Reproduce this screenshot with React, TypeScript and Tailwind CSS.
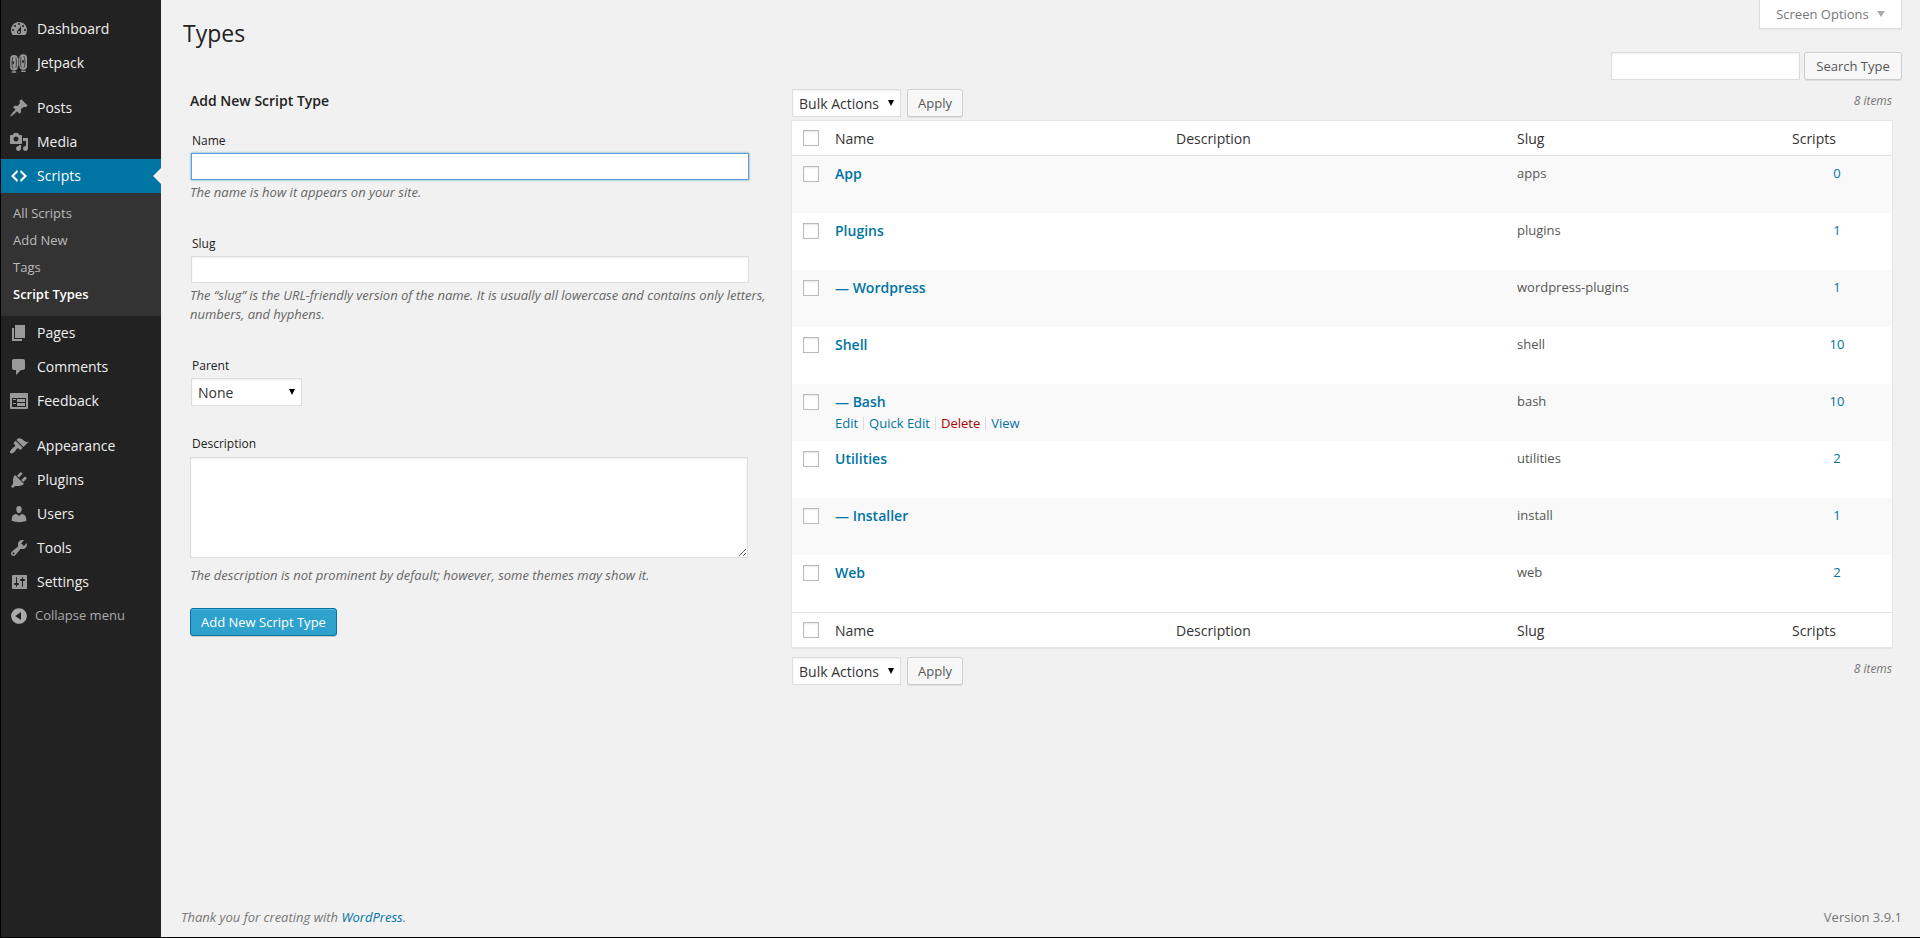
import React from "react";

const icons: Record<string, string> = {
  dashboard:
    "M3.76 16h12.48c1.1-1.37 1.76-3.11 1.76-5 0-4.42-3.58-8-8-8s-8 3.58-8 8c0 1.89.66 3.63 1.76 5zM10 4c.55 0 1 .45 1 1s-.45 1-1 1-1-.45-1-1 .45-1 1-1zM6 6c.55 0 1 .45 1 1s-.45 1-1 1-1-.45-1-1 .45-1 1-1zm8 0c.55 0 1 .45 1 1s-.45 1-1 1-1-.45-1-1 .45-1 1-1zm-5.37 5.55L12 7v6c0 1.1-.9 2-2 2s-2-.9-2-2c0-.57.24-1.08.63-1.45zM4 10c.55 0 1 .45 1 1s-.45 1-1 1-1-.45-1-1 .45-1 1-1zm12 0c.55 0 1 .45 1 1s-.45 1-1 1-1-.45-1-1 .45-1 1-1zm-5 3c0-.55-.45-1-1-1s-1 .45-1 1 .45 1 1 1 1-.45 1-1z",
  posts:
    "M10.44 3.02l1.82-1.82 6.36 6.35-1.83 1.82c-1.05-.68-2.48-.57-3.41.36l-.75.75c-.92.93-1.04 2.35-.35 3.41l-1.83 1.82-2.41-2.41-2.8 2.79c-.42.42-3.38 2.71-3.8 2.29s1.86-3.39 2.28-3.81l2.79-2.79L4.1 9.36l1.83-1.82c1.05.69 2.48.57 3.4-.36l.75-.75c.93-.92 1.05-2.35.36-3.41z",
  media:
    "M13 11V4c0-.55-.45-1-1-1h-1.67L9 1H5L3.67 3H2c-.55 0-1 .45-1 1v7c0 .55.45 1 1 1h10c.55 0 1-.45 1-1zM7 4.5c1.38 0 2.5 1.12 2.5 2.5S8.38 9.5 7 9.5 4.5 8.38 4.5 7 5.62 4.5 7 4.5zM14 6h5v10.5c0 1.38-1.12 2.5-2.5 2.5S14 17.88 14 16.5s1.12-2.5 2.5-2.5c.17 0 .34.02.5.05V9h-3V6zm-4 8.05V13h2v3.5c0 1.38-1.12 2.5-2.5 2.5S7 17.88 7 16.5 8.12 14 9.5 14c.17 0 .34.02.5.05z",
  code: "M9 6l-4 4 4 4-1 2-6-6 6-6zm2 8l4-4-4-4 1-2 6 6-6 6z",
  pages: "M6 15V2h10v13H6zm-1 1h8v2H3V5h2v11z",
  comments:
    "M5 2h9c1.1 0 2 .9 2 2v7c0 1.1-.9 2-2 2h-2l-5 5v-5H5c-1.1 0-2-.9-2-2V4c0-1.1.9-2 2-2z",
  feedback:
    "M2 2h16c.55 0 1 .45 1 1v14c0 .55-.45 1-1 1H2c-.55 0-1-.45-1-1V3c0-.55.45-1 1-1zm15 14V7H3v9h14zM4 8v1h3V8H4zm4 0v3h8V8H8zm-4 4v1h3v-1H4zm4 0v3h8v-3H8z",
  appearance:
    "M14.48 11.06L7.41 3.99l1.5-1.5c.5-.56 2.3-.47 3.51.32 1.21.8 1.43 1.28 2.91 2.1 1.18.64 2.45 1.26 4.45.85zm-.71.71L6.7 4.7 4.93 6.47c-.39.39-.39 1.02 0 1.41l1.06 1.06c.39.39.39 1.03 0 1.42-.6.6-1.43 1.11-2.21 1.69-.35.26-.7.53-1.01.84C1.43 14.23.4 16.08 1.4 17.07c.99 1 2.84-.03 4.18-1.36.31-.31.58-.66.85-1.02.57-.78 1.08-1.61 1.69-2.21.39-.39 1.02-.39 1.41 0l1.06 1.06c.39.39 1.02.39 1.41 0z",
  plugins:
    "M13.11 4.36L9.87 7.6 8 5.73l3.24-3.24c.35-.34 1.05-.2 1.56.32.52.51.66 1.21.31 1.55zm-8 1.77l.91-1.12 9.01 9.01-1.19.84c-.71.71-2.63 1.16-3.82 1.16H6.14L4.9 17.26c-.59.59-1.54.59-2.12 0-.59-.58-.59-1.53 0-2.12l1.24-1.24v-3.88c0-1.13.4-3.19 1.09-3.89zm7.26 3.97l3.24-3.24c.34-.35 1.04-.21 1.55.31.52.51.66 1.21.31 1.55l-3.24 3.25z",
  users:
    "M10 9.25c-2.27 0-2.73-3.44-2.73-3.44C7 4.02 7.82 2 9.97 2c2.16 0 2.98 2.02 2.71 3.81 0 0-.41 3.44-2.68 3.44zm0 2.57L12.72 10c2.39 0 4.52 2.33 4.52 4.53v2.49s-3.65 1.13-7.24 1.13c-3.65 0-7.24-1.13-7.24-1.13v-2.49c0-2.25 1.94-4.48 4.47-4.48z",
  tools:
    "M16.68 9.77c-1.34 1.34-3.3 1.67-4.95.99l-5.41 6.52c-.99.99-2.59.99-3.58 0s-.99-2.59 0-3.57l6.52-5.42c-.68-1.65-.35-3.61.99-4.95 1.28-1.28 3.12-1.62 4.72-1.06l-2.89 2.89 2.82 2.82 2.86-2.87c.53 1.58.18 3.39-1.08 4.65zM3.81 16.21c.4.39 1.04.39 1.43 0 .4-.4.4-1.04 0-1.43-.39-.4-1.03-.4-1.43 0-.39.39-.39 1.03 0 1.43z",
  settings:
    "M18 16V4c0-.55-.45-1-1-1H4c-.55 0-1 .45-1 1v12c0 .55.45 1 1 1h13c.55 0 1-.45 1-1zM8 11h1c.55 0 1 .45 1 1s-.45 1-1 1H8v1.5c0 .28-.22.5-.5.5s-.5-.22-.5-.5V13H6c-.55 0-1-.45-1-1s.45-1 1-1h1V5.500c0-.28.22-.5.5-.5s.5.22.5.5V11zm5-2h-1c-.55 0-1-.45-1-1s.45-1 1-1h1V5.500c0-.28.22-.5.5-.5s.5.22.5.5V7h1c.55 0 1 .45 1 1s-.45 1-1 1h-1v5.500c0 .28-.22.5-.5.5s-.5-.22-.5-.5V9z",
  collapse:
    "M10 2.16c4.33 0 7.84 3.51 7.84 7.84s-3.51 7.84-7.84 7.84S2.16 14.33 2.16 10 5.67 2.16 10 2.16zm2 11.72V6.12L6.18 9.97z",
};

function JetpackIcon() {
  return (
    <svg viewBox="0 0 20 20" className="size-5" fill="none" aria-hidden="true">
      <g fill="currentColor">
        <rect x="1.2" y="2" width="7.6" height="15.6" rx="3.8" />
        <rect x="10.400" y="1.200" width="7.600" height="15.600" rx="3.800" />
        <rect x="8" y="5" width="3" height="8" />
        <rect x="2.600" y="18.300" width="4.800" height="1.400" rx=".7" />
        <rect x="12" y="17.500" width="4.800" height="1.400" rx=".7" />
      </g>
      <g stroke="#222">
        <path d="M4.400 3.800C2.600 5.500 2.600 14 4.400 15.800M6.800 4.500c.8 2.500.8 8 0 10.500" strokeWidth=".8" />
        <path d="M12.200 3.800c-.8 2.500-.8 8 0 10.500M14.600 3c1.800 1.700 1.800 10.200 0 12" strokeWidth=".8" />
        <path d="M9.600 5v8" strokeWidth=".7" />
      </g>
      <g fill="#222">
        <path d="M4.200 7.800L5.400 9.700 4.200 11.600 3 9.700z" />
        <path d="M14 6.600l1.200 2-1.200 2-1.200-2z" />
      </g>
    </svg>
  );
}

function Icon({ name }: { name: string }) {
  if (name === "jetpack") return <JetpackIcon />;
  return (
    <svg viewBox="0 0 20 20" className="size-5" fill="currentColor" fillRule="evenodd" aria-hidden="true">
      <path d={icons[name]} />
    </svg>
  );
}

function MenuItem({ icon, label }: { icon: string; label: string }) {
  return (
    <li>
      <a href="#" className="flex h-[34px] items-center text-[14px] leading-[18px] text-[#eee]">
        <span className="flex w-9 justify-center text-[#999]">
          <Icon name={icon} />
        </span>
        {label}
      </a>
    </li>
  );
}

const submenu = ["All Scripts", "Add New", "Tags"];

function Sidebar() {
  return (
    <nav aria-label="Main menu" className="w-40 shrink-0 bg-[#222] pt-3">
      <ul>
        <MenuItem icon="dashboard" label="Dashboard" />
        <MenuItem icon="jetpack" label="Jetpack" />
      </ul>
      <ul className="mt-[11px]">
        <MenuItem icon="posts" label="Posts" />
        <MenuItem icon="media" label="Media" />
        <li>
          <a
            href="#"
            className="relative flex h-[34px] items-center bg-[#0074a2] text-[14px] leading-[18px] text-white"
          >
            <span className="flex w-9 justify-center">
              <Icon name="code" />
            </span>
            Scripts
            <span className="absolute top-1/2 right-0 -translate-y-1/2 border-8 border-transparent border-r-[#f1f1f1]" />
          </a>
          <ul className="bg-[#333] pt-[7px] pb-2 text-[13px] leading-[27px] text-[#bbb]">
            {submenu.map((item) => (
              <li key={item}>
                <a href="#" className="block px-3">
                  {item}
                </a>
              </li>
            ))}
            <li>
              <a href="#" className="block px-3 font-semibold text-white">
                Script Types
              </a>
            </li>
          </ul>
        </li>
        <MenuItem icon="pages" label="Pages" />
        <MenuItem icon="comments" label="Comments" />
        <MenuItem icon="feedback" label="Feedback" />
      </ul>
      <ul className="mt-[11px]">
        <MenuItem icon="appearance" label="Appearance" />
        <MenuItem icon="plugins" label="Plugins" />
        <MenuItem icon="users" label="Users" />
        <MenuItem icon="tools" label="Tools" />
        <MenuItem icon="settings" label="Settings" />
      </ul>
      <button type="button" className="flex h-[34px] items-center text-[13px] text-[#aaa]">
        <span className="flex w-[34px] justify-center pl-0.5">
          <Icon name="collapse" />
        </span>
        Collapse menu
      </button>
    </nav>
  );
}

const fieldClass =
  "block border border-[#ddd] bg-white text-[14px] text-[#333] shadow-[inset_0_1px_2px_rgba(0,0,0,0.07)] outline-none";

function Select({ id, value, className, label }: { id: string; value: string; className: string; label?: string }) {
  return (
    <div className={"relative " + className}>
      <select id={id} aria-label={label} className={fieldClass + " h-7 w-full appearance-none pr-5 pl-1.5"}>
        <option>{value}</option>
      </select>
      <svg
        viewBox="0 0 6 6"
        className="pointer-events-none absolute top-[11px] right-[7px] size-1.5 fill-black"
        aria-hidden="true"
      >
        <path d="M0 0h6L3 6z" />
      </svg>
    </div>
  );
}

const buttonClass =
  "h-7 rounded-[3px] border border-[#ccc] bg-[#f7f7f7] px-2.5 text-[13px] leading-[26px] text-[#555] shadow-[inset_0_1px_0_#fff,0_1px_0_rgba(0,0,0,0.08)]";

function Hint({ children }: { children: React.ReactNode }) {
  return <p className="text-[13px] leading-[19px] text-[#666] italic">{children}</p>;
}

const labelClass = "block pl-0.5 text-[12px] leading-[18px] text-[#222]";

function AddForm() {
  return (
    <form className="w-[578px] shrink-0" onSubmit={(e) => e.preventDefault()}>
      <h2 className="text-[14px] leading-5 font-semibold text-[#222]">Add New Script Type</h2>
      <div className="pt-[21px]">
        <label htmlFor="term-name" className={labelClass}>
          Name
        </label>
        <input
          id="term-name"
          type="text"
          className="mt-[3px] ml-px block h-[27px] w-[558px] border border-[#5b9dd9] bg-white px-1 text-[14px] shadow-[0_0_2px_rgba(30,140,190,0.8)] outline-none"
        />
        <div className="pt-[3px]">
          <Hint>The name is how it appears on your site.</Hint>
        </div>
      </div>
      <div className="pt-[33px]">
        <label htmlFor="term-slug" className={labelClass}>
          Slug
        </label>
        <input id="term-slug" type="text" className={fieldClass + " mt-[3px] ml-px h-[27px] w-[558px] px-1"} />
        <div className="pt-[3px]">
          <Hint>
            The “slug” is the URL-friendly version of the name. It is usually all lowercase and contains only letters,
            numbers, and hyphens.
          </Hint>
        </div>
      </div>
      <div className="pt-[33px]">
        <label htmlFor="term-parent" className={labelClass}>
          Parent
        </label>
        <Select id="term-parent" value="None" className="mt-[3px] ml-px w-[111px]" />
      </div>
      <div className="pt-[29px]">
        <label htmlFor="term-description" className={labelClass}>
          Description
        </label>
        <textarea id="term-description" className={fieldClass + " mt-1 h-[101px] w-[558px] resize px-1"} />
        <div className="pt-2">
          <Hint>The description is not prominent by default; however, some themes may show it.</Hint>
        </div>
      </div>
      <button
        type="submit"
        className="mt-[23px] block h-7 rounded-[3px] border border-[#0074a2] bg-[#2ea2cc] px-2.5 text-[13px] leading-[26px] text-white shadow-[inset_0_1px_0_rgba(120,200,230,0.5),0_1px_0_rgba(0,0,0,0.15)]"
      >
        Add New Script Type
      </button>
    </form>
  );
}

const rows = [
  { name: "App", slug: "apps", count: 0 },
  { name: "Plugins", slug: "plugins", count: 1 },
  { name: "— Wordpress", slug: "wordpress-plugins", count: 1 },
  { name: "Shell", slug: "shell", count: 10 },
  { name: "— Bash", slug: "bash", count: 10, actions: true },
  { name: "Utilities", slug: "utilities", count: 2 },
  { name: "— Installer", slug: "install", count: 1 },
  { name: "Web", slug: "web", count: 2 },
];

function Checkbox({ label }: { label: string }) {
  return (
    <input
      type="checkbox"
      aria-label={label}
      className="block size-4 appearance-none border border-[#bbb] bg-white shadow-[inset_0_1px_2px_rgba(0,0,0,0.1)]"
    />
  );
}

function RowActions() {
  return (
    <div className="flex items-center text-[13px] leading-[19px] text-[#0074a2]">
      <a href="#">Edit</a>
      <span className="mx-[5px] h-[13px] w-px bg-[#ddd]" />
      <a href="#">Quick Edit</a>
      <span className="mx-[5px] h-[13px] w-px bg-[#ddd]" />
      <a href="#" className="text-[#a00]">
        Delete
      </a>
      <span className="mx-[5px] h-[13px] w-px bg-[#ddd]" />
      <a href="#">View</a>
    </div>
  );
}

function HeadingCells({ where, border }: { where: string; border: string }) {
  const cell = "h-[35px] border-[#e1e1e1] pl-2.5 font-normal leading-[19px] " + border;
  return (
    <>
      <th className={"h-[35px] border-[#e1e1e1] pl-[11px] " + border}>
        <Checkbox label={"Select all, " + where} />
      </th>
      <th className={cell}>Name</th>
      <th className={cell}>Description</th>
      <th className={cell}>Slug</th>
      <th className={cell}>Scripts</th>
    </>
  );
}

function BulkBar({ id }: { id: string }) {
  return (
    <div className="flex gap-1.5 pl-px">
      <Select id={id} value="Bulk Actions" className="w-[109px]" label="Bulk actions" />
      <button type="button" className={buttonClass}>
        Apply
      </button>
      <span className="ml-auto pr-px text-[12px] leading-6 text-[#777] italic">8 items</span>
    </div>
  );
}

function TermsTable() {
  return (
    <section className="min-w-0 flex-1">
      <BulkBar id="bulk-top" />
      <div className="mt-[3px] border border-[#e5e5e5] bg-white shadow-[0_1px_1px_rgba(0,0,0,0.04)]">
        <table className="w-full table-fixed border-separate border-spacing-0 text-left">
          <colgroup>
            <col className="w-[33px]" />
            <col />
            <col />
            <col className="w-1/4" />
            <col className="w-1/10" />
          </colgroup>
          <thead className="text-[14px] text-[#333]">
            <tr>
              <HeadingCells where="top" border="border-b" />
            </tr>
          </thead>
          <tbody className="text-[13px] leading-[19px] text-[#555]">
            {rows.map((row) => (
              <tr key={row.slug} className="h-[57px] align-top odd:bg-[#f9f9f9]">
                <td className="pt-2.5 pl-[11px]">
                  <Checkbox label={"Select " + row.name} />
                </td>
                <td className="pt-2 pl-2.5">
                  <a href="#" className="mb-[3px] block text-[14px] font-semibold text-[#0074a2]">
                    {row.name}
                  </a>
                  {row.actions && <RowActions />}
                </td>
                <td />
                <td className="pt-2 pl-2.5">{row.slug}</td>
                <td className="pt-2 text-center">
                  <a href="#" className="text-[#0074a2]">
                    {row.count}
                  </a>
                </td>
              </tr>
            ))}
          </tbody>
          <tfoot className="text-[14px] text-[#333]">
            <tr>
              <HeadingCells where="bottom" border="border-t" />
            </tr>
          </tfoot>
        </table>
      </div>
      <div className="pt-[9px]">
        <BulkBar id="bulk-bottom" />
      </div>
    </section>
  );
}

export default function App() {
  return (
    <div className="flex min-h-screen border-b border-l border-black bg-[#f1f1f1] font-['Open_Sans',sans-serif] text-[13px] text-[#444]">
      <Sidebar />
      <div className="flex min-w-0 flex-1 flex-col pr-[18px] pl-5">
        <header className="flex items-start justify-between">
          <h1 className="pt-[19px] pl-0.5 text-[23px] leading-[29px] text-[#222]">Types</h1>
          <button
            type="button"
            className="flex h-[29px] w-[143px] items-center justify-center gap-2 border border-t-0 border-[#ddd] bg-white pt-0.5 text-[13px] text-[#777] shadow-[0_1px_1px_rgba(0,0,0,0.04)]"
          >
            Screen Options
            <svg viewBox="0 0 8 6" className="mb-0.5 h-1.5 w-2 fill-[#aaa]" aria-hidden="true">
              <path d="M0 0h8L4 6z" />
            </svg>
          </button>
        </header>
        <form className="mt-1 flex justify-end gap-1" role="search" onSubmit={(e) => e.preventDefault()}>
          <input type="search" aria-label="Search" className={fieldClass + " h-7 w-[189px] px-1"} />
          <button type="submit" className={buttonClass + " min-w-[98px]"}>
            Search Type
          </button>
        </form>
        <main className="flex gap-[23px] pt-[9px] pr-[9px] pl-[9px]">
          <div className="pt-0.5">
            <AddForm />
          </div>
          <TermsTable />
        </main>
        <footer className="mt-auto flex justify-between pb-2.5 leading-[19px] text-[#777]">
          <p className="italic">
            Thank you for creating with{" "}
            <a href="#" className="text-[#0074a2]">
              WordPress
            </a>
            .
          </p>
          <p>Version 3.9.1</p>
        </footer>
      </div>
    </div>
  );
}
